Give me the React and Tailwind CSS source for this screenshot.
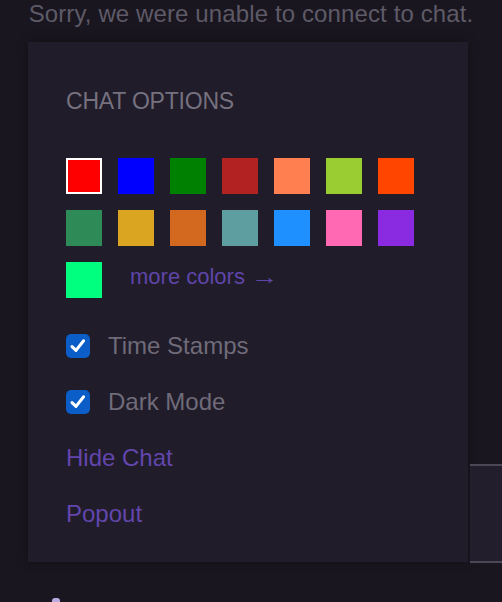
import React from 'react';

// Twitch-style named colours
const SWATCHES = [
    '#ff0000', '#0000ff', '#008000', '#b22222', '#ff7f50', '#9acd32', '#ff4500',
    '#2e8b57', '#daa520', '#d2691e', '#5f9ea0', '#1e90ff', '#ff69b4', '#8a2be2',
    '#00ff7f',
];

const Check = ({ label }) => (
    <label className="flex items-center h-[28px] gap-[18px]">
        <span className="w-[24px] h-[24px] rounded-[5px] bg-[#0b5ec8] flex items-center justify-center">
            <svg width="24" height="24" viewBox="0 0 24 24">
                <path d="M6 12.6 L10 16.4 L17.6 6.8" fill="none" stroke="#fff" strokeWidth="3" strokeLinecap="round" strokeLinejoin="round" />
            </svg>
        </span>
        <span className="text-[24px] leading-[28px] text-[#6f6b79]">{label}</span>
    </label>
);

const App = () => {
    return (
        <div className="relative w-[502px] h-[602px] overflow-hidden bg-[#19161f] font-['Liberation_Sans',Arial,sans-serif]">
            <div className="h-[42px] text-center text-[24px] leading-[28px] tracking-[0.12px] text-[#5e5a67]">
                Sorry, we were unable to connect to chat.
            </div>

            <div className="ml-[28px] w-[440px] h-[520px] bg-[#201c2a] shadow-[0_0_10px_rgba(0,0,0,0.35)] pl-[38px] pt-[45px]">
                <div className="text-[23px] leading-[28px] text-[#75717f] tracking-[-0.2px]">CHAT OPTIONS</div>

                <div className="mt-[43px] grid grid-cols-[repeat(7,36px)] gap-[16px]">
                    {SWATCHES.map((c, i) => (
                        <div
                            key={c}
                            className={i === 0 ? 'w-[36px] h-[36px] border-2 border-white' : 'w-[36px] h-[36px]'}
                            style={{ backgroundColor: c }}
                        />
                    ))}
                    <div className="col-span-4 ml-[12px] mt-px text-[22px] leading-[28px] text-[#5f45a8] whitespace-nowrap">
                        more colors <span className="inline-block origin-left scale-x-[1.25]">→</span>
                    </div>
                </div>

                <div className="mt-[34px] flex flex-col gap-[28px]">
                    <Check label="Time Stamps" />
                    <Check label="Dark Mode" />
                    <div className="text-[24px] leading-[28px] text-[#6246ad]">Hide Chat</div>
                    <div className="text-[24px] leading-[28px] text-[#6246ad]">Popout</div>
                </div>
            </div>

            <div className="mt-[36px] ml-[52px] w-[8px] h-[4px] rounded-t-[3px] bg-[#b9abe0]" />

            {/* peeking element at the right edge */}
            <div className="absolute right-0 top-[464px] w-[32px] h-[99px] bg-[#221e2b] border-y-2 border-[#4b4755]" />
        </div>
    );
};

export default App;
